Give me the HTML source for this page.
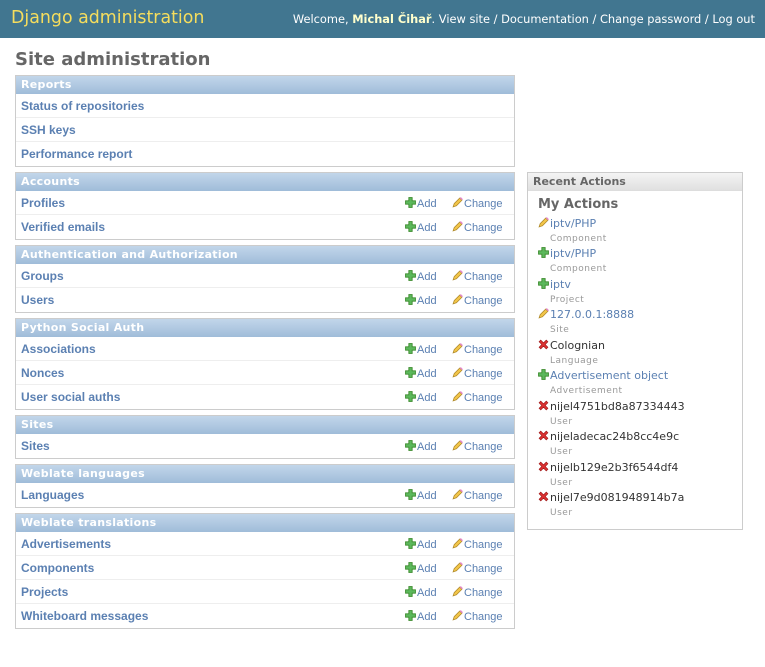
<!DOCTYPE html>
<html><head><meta charset="utf-8"><style>
*{margin:0;padding:0;box-sizing:border-box}
body{width:765px;height:667px;background:#fff;font-family:"DejaVu Sans",sans-serif;position:relative;overflow:hidden}
#hdr{position:absolute;left:0;top:0;width:765px;height:38px;background:#417690}
#hdr .t{position:absolute;left:11px;top:8px;font-size:17.4px;color:#f5dd5d;white-space:nowrap}
#hdr .u{position:absolute;right:10px;top:12px;font-size:11.4px;color:#fff;white-space:nowrap}
h1{position:absolute;left:15px;top:49px;font-size:18px;font-weight:bold;color:#666}
.m{position:absolute;left:15px;width:500px;border:1px solid #ccc;background:#fff}
.cap{height:18px;background:linear-gradient(#c2d6ea,#9fbcd9);color:#fff;font-size:11px;font-weight:bold;padding:2px 0 0 5px;letter-spacing:.3px}
.r{height:24px;border-bottom:1px solid #eee;position:relative}
.r:last-child{border-bottom:none}
.r .n{position:absolute;left:5px;top:5px;font-family:"Liberation Sans",sans-serif;font-weight:bold;font-size:12px;color:#5b80b2}
.r .a{position:absolute;left:389px;top:6px;font-family:"Liberation Sans",sans-serif;font-size:11px;color:#5b80b2;white-space:nowrap}
.r .c{position:absolute;left:436px;top:6px;font-family:"Liberation Sans",sans-serif;font-size:11px;color:#5b80b2;white-space:nowrap}
svg{vertical-align:-1px;margin-right:1px}
#ra{position:absolute;left:527px;top:172px;width:216px;height:358px;border:1px solid #ccc}
#ra .cap2{height:18px;background:linear-gradient(#f4f4f4,#e0e0e0);color:#666;font-size:11px;font-weight:bold;padding:2px 0 0 5px;border-bottom:1px solid #ddd}
#ra h3{position:absolute;left:10px;top:24px;font-size:13px;font-weight:bold;color:#666}
.it{position:absolute;left:10px;font-size:11px;color:#333;white-space:nowrap}
.it .l{color:#5b80b2}
.it .s{display:block;font-size:9px;color:#999;margin:4px 0 0 12px;letter-spacing:.5px}
</style></head><body>
<div id="hdr"><div class="t">Django administration</div>
<div class="u">Welcome, <b style="color:#ffc">Michal Čihař</b>. View site / Documentation / Change password / Log out</div></div>
<h1>Site administration</h1>

<svg width="0" height="0" style="position:absolute"><defs>
<symbol id="p" viewBox="0 0 10 10"><path d="M3.5 0.5h3v3h3v3h-3v3h-3v-3h-3v-3h3z" fill="#5cb85c" stroke="#3a8a2a" stroke-width="0.8"/></symbol>
<symbol id="e" viewBox="0 0 10 10"><path d="M1 9l1-3 5-5 2 2-5 5z" fill="#f3c649" stroke="#b08a2a" stroke-width="0.7"/><path d="M7 1l2 2 1-1-2-2z" fill="#e58ac9"/></symbol>
<symbol id="x" viewBox="0 0 10 10"><path d="M1 2.5l1.5-1.5 2.5 2.5 2.5-2.5 1.5 1.5-2.5 2.5 2.5 2.5-1.5 1.5-2.5-2.5-2.5 2.5-1.5-1.5 2.5-2.5z" fill="#dd3333" stroke="#a01818" stroke-width="0.6"/></symbol>
</defs></svg>

<div class="m" style="top:75px"><div class="cap">Reports</div>
<div class="r"><span class="n">Status of repositories</span></div>
<div class="r"><span class="n">SSH keys</span></div>
<div class="r"><span class="n">Performance report</span></div></div>

<div class="m" style="top:172px"><div class="cap">Accounts</div>
<div class="r"><span class="n">Profiles</span><span class="a"><svg width="11" height="11"><use href="#p"/></svg>Add</span><span class="c"><svg width="11" height="11"><use href="#e"/></svg>Change</span></div>
<div class="r"><span class="n">Verified emails</span><span class="a"><svg width="11" height="11"><use href="#p"/></svg>Add</span><span class="c"><svg width="11" height="11"><use href="#e"/></svg>Change</span></div></div>

<div class="m" style="top:245px"><div class="cap">Authentication and Authorization</div>
<div class="r"><span class="n">Groups</span><span class="a"><svg width="11" height="11"><use href="#p"/></svg>Add</span><span class="c"><svg width="11" height="11"><use href="#e"/></svg>Change</span></div>
<div class="r"><span class="n">Users</span><span class="a"><svg width="11" height="11"><use href="#p"/></svg>Add</span><span class="c"><svg width="11" height="11"><use href="#e"/></svg>Change</span></div></div>

<div class="m" style="top:318px"><div class="cap">Python Social Auth</div>
<div class="r"><span class="n">Associations</span><span class="a"><svg width="11" height="11"><use href="#p"/></svg>Add</span><span class="c"><svg width="11" height="11"><use href="#e"/></svg>Change</span></div>
<div class="r"><span class="n">Nonces</span><span class="a"><svg width="11" height="11"><use href="#p"/></svg>Add</span><span class="c"><svg width="11" height="11"><use href="#e"/></svg>Change</span></div>
<div class="r"><span class="n">User social auths</span><span class="a"><svg width="11" height="11"><use href="#p"/></svg>Add</span><span class="c"><svg width="11" height="11"><use href="#e"/></svg>Change</span></div></div>

<div class="m" style="top:415px"><div class="cap">Sites</div>
<div class="r"><span class="n">Sites</span><span class="a"><svg width="11" height="11"><use href="#p"/></svg>Add</span><span class="c"><svg width="11" height="11"><use href="#e"/></svg>Change</span></div></div>

<div class="m" style="top:464px"><div class="cap">Weblate languages</div>
<div class="r"><span class="n">Languages</span><span class="a"><svg width="11" height="11"><use href="#p"/></svg>Add</span><span class="c"><svg width="11" height="11"><use href="#e"/></svg>Change</span></div></div>

<div class="m" style="top:513px"><div class="cap">Weblate translations</div>
<div class="r"><span class="n">Advertisements</span><span class="a"><svg width="11" height="11"><use href="#p"/></svg>Add</span><span class="c"><svg width="11" height="11"><use href="#e"/></svg>Change</span></div>
<div class="r"><span class="n">Components</span><span class="a"><svg width="11" height="11"><use href="#p"/></svg>Add</span><span class="c"><svg width="11" height="11"><use href="#e"/></svg>Change</span></div>
<div class="r"><span class="n">Projects</span><span class="a"><svg width="11" height="11"><use href="#p"/></svg>Add</span><span class="c"><svg width="11" height="11"><use href="#e"/></svg>Change</span></div>
<div class="r"><span class="n">Whiteboard messages</span><span class="a"><svg width="11" height="11"><use href="#p"/></svg>Add</span><span class="c"><svg width="11" height="11"><use href="#e"/></svg>Change</span></div></div>

<div id="ra"><div class="cap2">Recent Actions</div><h3>My Actions</h3>
<div class="it" style="top:44px"><svg width="11" height="11"><use href="#e"/></svg><span class="l">iptv/PHP</span><span class="s">Component</span></div>
<div class="it" style="top:74px"><svg width="11" height="11"><use href="#p"/></svg><span class="l">iptv/PHP</span><span class="s">Component</span></div>
<div class="it" style="top:105px"><svg width="11" height="11"><use href="#p"/></svg><span class="l">iptv</span><span class="s">Project</span></div>
<div class="it" style="top:135px"><svg width="11" height="11"><use href="#e"/></svg><span class="l">127.0.0.1:8888</span><span class="s">Site</span></div>
<div class="it" style="top:166px"><svg width="11" height="11"><use href="#x"/></svg>Colognian<span class="s">Language</span></div>
<div class="it" style="top:196px"><svg width="11" height="11"><use href="#p"/></svg><span class="l">Advertisement object</span><span class="s">Advertisement</span></div>
<div class="it" style="top:227px"><svg width="11" height="11"><use href="#x"/></svg>nijel4751bd8a87334443<span class="s">User</span></div>
<div class="it" style="top:257px"><svg width="11" height="11"><use href="#x"/></svg>nijeladecac24b8cc4e9c<span class="s">User</span></div>
<div class="it" style="top:288px"><svg width="11" height="11"><use href="#x"/></svg>nijelb129e2b3f6544df4<span class="s">User</span></div>
<div class="it" style="top:318px"><svg width="11" height="11"><use href="#x"/></svg>nijel7e9d081948914b7a<span class="s">User</span></div>
</div>
</body></html>
